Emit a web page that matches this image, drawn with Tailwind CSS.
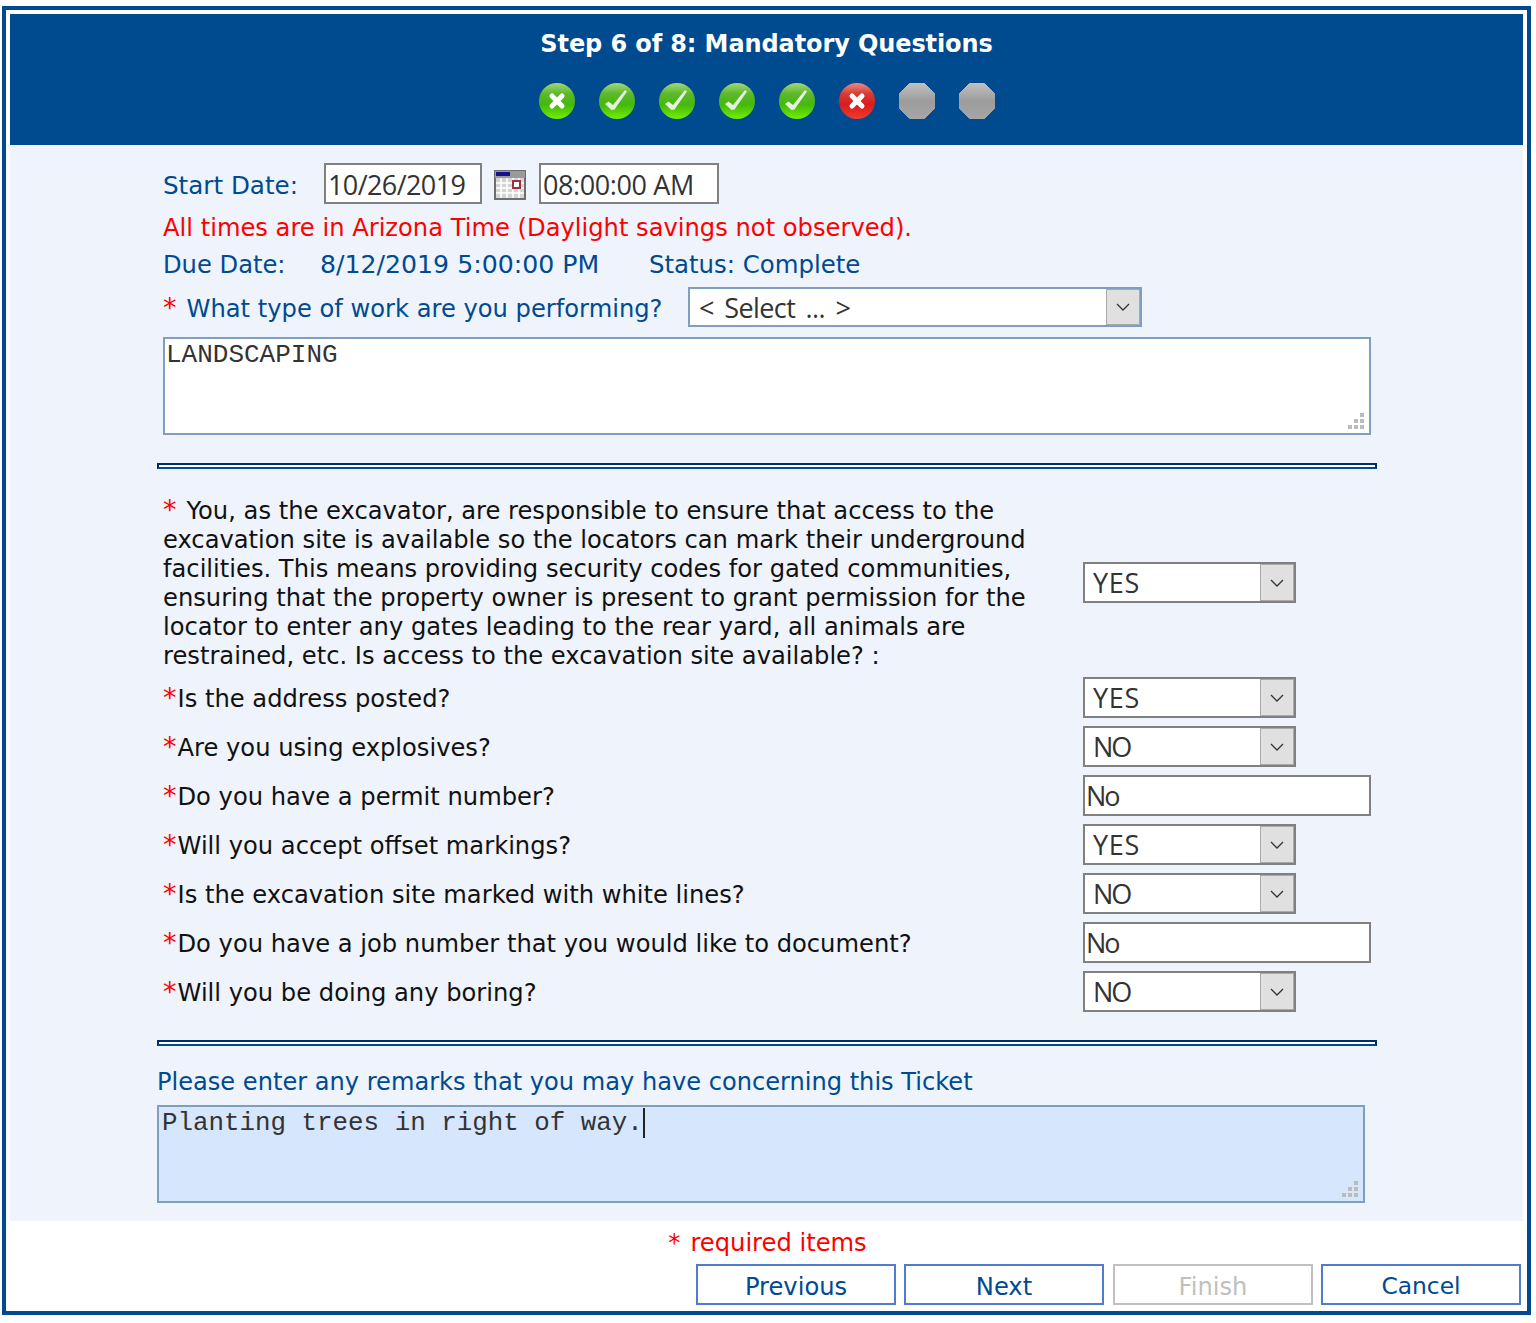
<!DOCTYPE html>
<html lang="en">
<head>
  <meta charset="UTF-8" />
  <title>Step 6 of 8: Mandatory Questions</title>
  <script src="https://cdn.jsdelivr.net/npm/@tailwindcss/browser@4"></script>
</head>
<body class="bg-white font-['DejaVu_Sans',sans-serif]">
  <svg width="0" height="0" class="absolute">
    <defs>
      <linearGradient id="green" x1="0" y1="0" x2="0" y2="1">
        <stop offset="0" stop-color="#a4d878"/><stop offset="0.3" stop-color="#5cb82c"/><stop offset="0.6" stop-color="#44b80c"/><stop offset="1" stop-color="#72f000"/>
      </linearGradient>
      <linearGradient id="red" x1="0" y1="0" x2="0" y2="1">
        <stop offset="0" stop-color="#e88c84"/><stop offset="0.3" stop-color="#d83a34"/><stop offset="0.6" stop-color="#d81c1c"/><stop offset="1" stop-color="#f03c30"/>
      </linearGradient>
      <linearGradient id="grey" x1="0" y1="0" x2="0" y2="1">
        <stop offset="0" stop-color="#c0c0c0"/><stop offset="0.5" stop-color="#9c9c9c"/><stop offset="1" stop-color="#a6a6a6"/>
      </linearGradient>
      <symbol id="cross" viewBox="0 0 38 38">
        <path d="M14 14l10 10M24 14L14 24" stroke="#fff" stroke-width="5" stroke-linecap="round" fill="none"/>
      </symbol>
      <symbol id="tick" viewBox="0 0 38 38">
        <polygon points="7,22 10.5,19.5 15,23 27,8 29,9.5 16.5,27.5 13.5,28" fill="#e8f0e0"/>
      </symbol>
      <symbol id="grip" viewBox="0 0 16 16">
        <path fill="#bbb" d="M12 0h4v4h-4zM6 6h4v4H6zM12 6h4v4h-4zM0 12h4v4H0zM6 12h4v4H6zM12 12h4v4h-4z"/>
      </symbol>
      <symbol id="caret" viewBox="0 0 14 8">
        <path d="M1 1l6 6 6-6" stroke="#333" stroke-width="1.3" fill="none"/>
      </symbol>
    </defs>
  </svg>

  <div class="mt-[6px] ml-[2px] w-[1529px] h-[1309px] border-4 border-[#004a90] p-1 flex flex-col">
    <!-- header -->
    <header class="h-[131px] bg-[#004a90] flex flex-col items-center pt-[14px]">
      <h1 class="text-white font-bold text-[24px] leading-[32px] tracking-[-0.1px]">Step 6 of 8: Mandatory Questions</h1>
      <div class="flex gap-[22px] mt-[22px]">
        <svg class="w-[38px] h-[38px]" viewBox="0 0 38 38"><circle cx="19" cy="19" r="18" fill="url(#green)"/><use href="#cross" width="38" height="38"/></svg>
        <svg class="w-[38px] h-[38px]" viewBox="0 0 38 38"><circle cx="19" cy="19" r="18" fill="url(#green)"/><use href="#tick" width="38" height="38"/></svg>
        <svg class="w-[38px] h-[38px]" viewBox="0 0 38 38"><circle cx="19" cy="19" r="18" fill="url(#green)"/><use href="#tick" width="38" height="38"/></svg>
        <svg class="w-[38px] h-[38px]" viewBox="0 0 38 38"><circle cx="19" cy="19" r="18" fill="url(#green)"/><use href="#tick" width="38" height="38"/></svg>
        <svg class="w-[38px] h-[38px]" viewBox="0 0 38 38"><circle cx="19" cy="19" r="18" fill="url(#green)"/><use href="#tick" width="38" height="38"/></svg>
        <svg class="w-[38px] h-[38px]" viewBox="0 0 38 38"><circle cx="19" cy="19" r="18" fill="url(#red)"/><use href="#cross" width="38" height="38"/></svg>
        <svg class="w-[38px] h-[38px]" viewBox="0 0 38 38"><polygon points="11.5,1.5 26.5,1.5 36.5,11.5 36.5,26.5 26.5,36.5 11.5,36.5 1.5,26.5 1.5,11.5" fill="url(#grey)" stroke="url(#grey)" stroke-width="1" stroke-linejoin="round"/></svg>
        <svg class="w-[38px] h-[38px]" viewBox="0 0 38 38"><polygon points="11.5,1.5 26.5,1.5 36.5,11.5 36.5,26.5 26.5,36.5 11.5,36.5 1.5,26.5 1.5,11.5" fill="url(#grey)" stroke="url(#grey)" stroke-width="1" stroke-linejoin="round"/></svg>
      </div>
    </header>

    <!-- form body -->
    <main class="h-[1076px] bg-[#eef3fc] pl-[147px] flex flex-col text-[24.2px] text-[#004a90]">
      <div class="flex items-center h-[41px] mt-[18px] ml-[6px]">
        <span class="w-[161px] pt-[6px] text-[24.6px]">Start Date:</span>
        <div class="w-[158px] h-[41px] border-2 border-[#808080] bg-white pl-[2px] pt-[4px] flex items-center text-[#333] font-['Open_Sans',sans-serif] text-[27px] tracking-[-0.6px]">10/26/2019</div>
        <svg class="w-[32px] h-[30px] ml-[12px] mt-[2px]" viewBox="0 0 32 30">
          <rect width="32" height="30" fill="#6e6e6e"/>
          <rect x="1" y="1" width="30" height="7" fill="#9a9a9a"/>
          <rect x="2" y="2" width="14" height="4" fill="#12128a"/>
          <rect x="2" y="8" width="28" height="20" fill="#d4d4d4"/>
          <path d="M2 13h28M2 18h28M2 23h28M7 8v20M13 8v20M19 8v20M25 8v20" stroke="#fff" stroke-width="1.5"/>
          <rect x="19" y="11" width="7" height="7" fill="#fff" stroke="#a03040" stroke-width="2"/>
        </svg>
        <div class="w-[180px] h-[41px] ml-[13px] border-2 border-[#808080] bg-white pl-[2px] pt-[4px] flex items-center text-[#333] font-['Open_Sans',sans-serif] text-[27px] tracking-[-0.4px]">08:00:00 AM</div>
      </div>
      <div class="ml-[6px] mt-[3px] h-[40px] leading-[42px] text-[#ff0000]">All times are in Arizona Time (Daylight savings not observed).</div>
      <div class="ml-[6px] flex h-[34px] leading-[36px]">
        <span class="w-[157px]">Due Date:</span><span class="w-[329px] text-[25.2px]">8/12/2019 5:00:00 PM</span><span class="text-[24.4px]">Status: Complete</span>
      </div>
      <div class="ml-[6px] mt-[6px] flex items-center h-[40px]">
        <span class="w-[525px] pt-[4px]"><span class="text-[#ff0000] text-[27px] leading-none mr-[10px]">*</span>What type of work are you performing?</span>
        <div class="w-[454px] h-[40px] border-2 border-[#7f9fc0] bg-white flex items-stretch text-[#333] font-['Open_Sans',sans-serif] text-[27px]">
          <span class="flex-1 pl-[9px] pt-[2px] flex items-center tracking-[-0.6px] [word-spacing:4px]">&lt; Select ... &gt;</span>
          <span class="w-[34px] border border-[#aaa] bg-[#e0e0e0] flex items-center justify-center"><svg class="w-[14px] h-[8px]"><use href="#caret"/></svg></span>
        </div>
      </div>
      <div class="relative ml-[6px] mt-[10px] w-[1208px] h-[98px] border-2 border-[#7f9fc0] bg-white pl-[1px] pt-[1px] font-['Liberation_Mono',monospace] text-[#333] text-[26px] leading-[30px]">
        LANDSCAPING
        <svg class="absolute right-[5px] bottom-[4px] w-[16px] h-[16px]"><use href="#grip"/></svg>
      </div>

      <div class="mt-[28px] w-[1220px] h-[6px] border-2 border-t-[#002f63] border-x-[#002f63] border-b-[#004a90] bg-white"></div>

      <!-- questions -->
      <div class="ml-[6px] mt-[27px] flex flex-col text-[#111]">
        <div class="flex items-start h-[174px]">
          <p class="w-[920px] leading-[29px]"><span class="text-[#ff0000] text-[27px] leading-none mr-[10px]">*</span>You, as the excavator, are responsible to ensure that access to the excavation site is available so the locators can mark their underground facilities. This means providing security codes for gated communities, ensuring that the property owner is present to grant permission for the locator to enter any gates leading to the rear yard, all animals are restrained, etc. Is access to the excavation site available? :</p>
          <div class="w-[213px] h-[41px] mt-[66px] border-2 border-[#808080] bg-white flex items-stretch text-[#333] font-['Open_Sans',sans-serif] text-[27px]">
            <span class="flex-1 pl-[8px] pt-[2px] flex items-center tracking-[0.7px]">YES</span>
            <span class="w-[34px] border border-[#aaa] bg-[#e0e0e0] flex items-center justify-center"><svg class="w-[14px] h-[8px]"><use href="#caret"/></svg></span>
          </div>
        </div>
        <div class="flex items-center h-[49px] mt-[3px]">
          <p class="w-[920px] pt-[4px]"><span class="text-[#ff0000] text-[27px] leading-none mr-px">*</span>Is the address posted?</p>
          <div class="w-[213px] h-[41px] border-2 border-[#808080] bg-white flex items-stretch text-[#333] font-['Open_Sans',sans-serif] text-[27px]">
            <span class="flex-1 pl-[8px] pt-[2px] flex items-center tracking-[0.7px]">YES</span>
            <span class="w-[34px] border border-[#aaa] bg-[#e0e0e0] flex items-center justify-center"><svg class="w-[14px] h-[8px]"><use href="#caret"/></svg></span>
          </div>
        </div>
        <div class="flex items-center h-[49px]">
          <p class="w-[920px] pt-[4px]"><span class="text-[#ff0000] text-[27px] leading-none mr-px">*</span>Are you using explosives?</p>
          <div class="w-[213px] h-[41px] border-2 border-[#808080] bg-white flex items-stretch text-[#333] font-['Open_Sans',sans-serif] text-[27px]">
            <span class="flex-1 pl-[8px] pt-[2px] flex items-center tracking-[-2px]">NO</span>
            <span class="w-[34px] border border-[#aaa] bg-[#e0e0e0] flex items-center justify-center"><svg class="w-[14px] h-[8px]"><use href="#caret"/></svg></span>
          </div>
        </div>
        <div class="flex items-center h-[49px]">
          <p class="w-[920px] pt-[4px]"><span class="text-[#ff0000] text-[27px] leading-none mr-px">*</span>Do you have a permit number?</p>
          <div class="w-[288px] h-[41px] border-2 border-[#808080] bg-white pl-[1px] pt-[2px] flex items-center text-[#333] font-['Open_Sans',sans-serif] text-[27px] tracking-[-2px]">No</div>
        </div>
        <div class="flex items-center h-[49px]">
          <p class="w-[920px] pt-[4px]"><span class="text-[#ff0000] text-[27px] leading-none mr-px">*</span>Will you accept offset markings?</p>
          <div class="w-[213px] h-[41px] border-2 border-[#808080] bg-white flex items-stretch text-[#333] font-['Open_Sans',sans-serif] text-[27px]">
            <span class="flex-1 pl-[8px] pt-[2px] flex items-center tracking-[0.7px]">YES</span>
            <span class="w-[34px] border border-[#aaa] bg-[#e0e0e0] flex items-center justify-center"><svg class="w-[14px] h-[8px]"><use href="#caret"/></svg></span>
          </div>
        </div>
        <div class="flex items-center h-[49px]">
          <p class="w-[920px] pt-[4px]"><span class="text-[#ff0000] text-[27px] leading-none mr-px">*</span>Is the excavation site marked with white lines?</p>
          <div class="w-[213px] h-[41px] border-2 border-[#808080] bg-white flex items-stretch text-[#333] font-['Open_Sans',sans-serif] text-[27px]">
            <span class="flex-1 pl-[8px] pt-[2px] flex items-center tracking-[-2px]">NO</span>
            <span class="w-[34px] border border-[#aaa] bg-[#e0e0e0] flex items-center justify-center"><svg class="w-[14px] h-[8px]"><use href="#caret"/></svg></span>
          </div>
        </div>
        <div class="flex items-center h-[49px]">
          <p class="w-[920px] pt-[4px]"><span class="text-[#ff0000] text-[27px] leading-none mr-px">*</span>Do you have a job number that you would like to document?</p>
          <div class="w-[288px] h-[41px] border-2 border-[#808080] bg-white pl-[1px] pt-[2px] flex items-center text-[#333] font-['Open_Sans',sans-serif] text-[27px] tracking-[-2px]">No</div>
        </div>
        <div class="flex items-center h-[49px]">
          <p class="w-[920px] pt-[4px]"><span class="text-[#ff0000] text-[27px] leading-none mr-px">*</span>Will you be doing any boring?</p>
          <div class="w-[213px] h-[41px] border-2 border-[#808080] bg-white flex items-stretch text-[#333] font-['Open_Sans',sans-serif] text-[27px]">
            <span class="flex-1 pl-[8px] pt-[2px] flex items-center tracking-[-2px]">NO</span>
            <span class="w-[34px] border border-[#aaa] bg-[#e0e0e0] flex items-center justify-center"><svg class="w-[14px] h-[8px]"><use href="#caret"/></svg></span>
          </div>
        </div>
      </div>

      <div class="mt-[24px] w-[1220px] h-[6px] border-2 border-t-[#002f63] border-x-[#002f63] border-b-[#004a90] bg-white"></div>
      <div class="mt-[18px] h-[34px] leading-[36px] text-[24.1px]">Please enter any remarks that you may have concerning this Ticket</div>
      <div class="relative mt-[7px] w-[1208px] h-[98px] border-2 border-[#7f9fc0] bg-[#d6e6fd] pl-[3px] pt-[1px] font-['Liberation_Mono',monospace] text-[#333] text-[25.85px] leading-[30px]">
        <span class="border-r-2 border-[#222]">Planting trees in right of way.</span>
        <svg class="absolute right-[5px] bottom-[4px] w-[16px] h-[16px]"><use href="#grip"/></svg>
      </div>
    </main>

    <!-- footer -->
    <footer class="flex flex-col items-end text-[24.2px] pr-[2px]">
      <div class="w-full h-[43px] pl-[4px] text-center text-[#ff0000] leading-[45px]"><span class="mr-[10px]">*</span>required items</div>
      <div class="flex gap-[8px]">
        <button class="w-[200px] h-[41px] pt-[3px] border-2 border-[#4f7bd0] bg-white text-[#004a90]">Previous</button>
        <button class="w-[200px] h-[41px] pt-[3px] border-2 border-[#4f7bd0] bg-white text-[#004a90]">Next</button>
        <button class="w-[200px] h-[41px] pt-[3px] ml-px border-2 border-[#c0c0c0] bg-white text-[#c0c0c0]">Finish</button>
        <button class="w-[200px] h-[41px] pt-[3px] border-2 border-[#4f7bd0] bg-white text-[#004a90] text-[23.4px]">Cancel</button>
      </div>
    </footer>
  </div>
</body>
</html>
